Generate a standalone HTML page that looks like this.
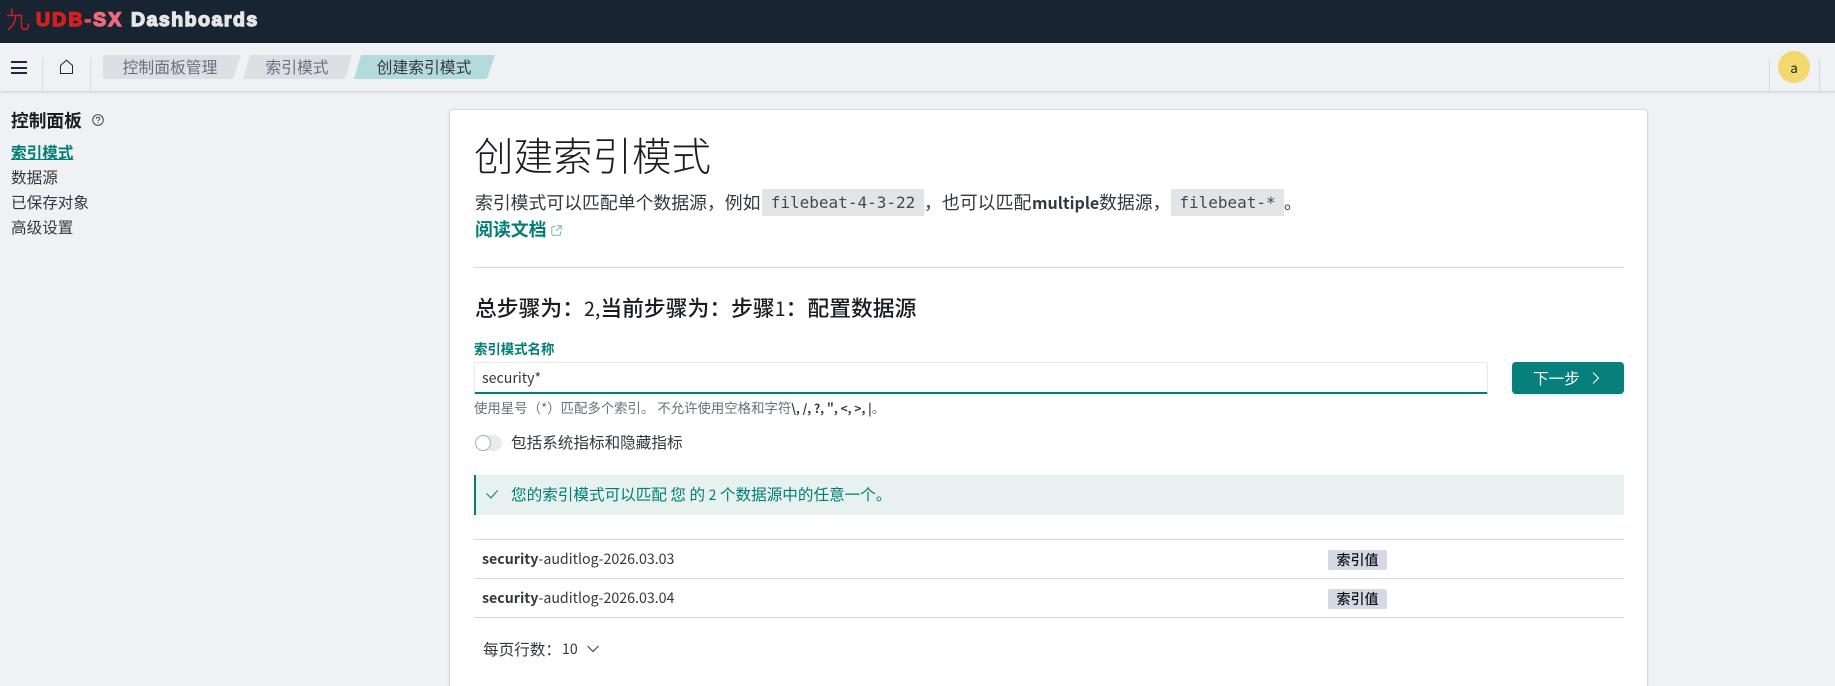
<!DOCTYPE html>
<html lang="zh"><head><meta charset="utf-8"><title>创建索引模式</title>
<style>
*{box-sizing:border-box}
html,body{margin:0;padding:0;width:1835px;height:686px;overflow:hidden;background:#f0f1f4}
body{font-family:"Noto Sans CJK SC","Liberation Sans",sans-serif;color:#343741;position:relative;font-size:16px}
.a{position:absolute;white-space:nowrap;line-height:1}
.top{left:0;top:0;width:1835px;height:43px;background:#182431}
.nav{left:0;top:43px;width:1835px;height:48px;background:#f0f1f4;box-shadow:0 1px 2px rgba(0,0,0,.16)}
.v{position:absolute;width:1px;background:#d6d8dd;top:59px;height:32px}
.logo{font-family:"Liberation Sans",sans-serif;font-weight:700;font-size:19.5px}
.bc{font-size:15.8px;text-align:center;line-height:24px;height:24px;top:55px;color:#69707d;width:140px}
.card{left:449px;top:109px;width:1199px;height:600px;background:#fff;border:1px solid #d6d8dd;border-radius:4px;box-shadow:0 1px 3px rgba(0,0,0,.08)}
.code{position:absolute;top:189px;height:27px;background:#e3e4e8;font-family:"DejaVu Sans Mono","Liberation Mono",monospace;font-size:16px;line-height:27px;text-align:center;color:#45484f}
.line{position:absolute;left:474px;width:1150px;height:1px;background:#d6d8dd}
.badge{position:absolute;left:1328px;width:59px;height:20px;background:#d3dae6;border-radius:2px;text-align:center;font-size:14px;line-height:20px;color:#111;font-weight:500}
.row{left:482px;font-size:14.2px;color:#343741}
.row b{font-weight:700}
</style></head><body>
<div class="a top"></div>
<svg class="a" style="left:6px;top:7px" width="24" height="24" viewBox="0 0 24 24" fill="none" stroke="#cc1f1f" stroke-width="1.5"><path d="M1 8.5H9.5C9.5 14 7.5 19 2 22.5M5.8 1.5V8.5M9.5 8.5H15.5V18.5C15.5 21.5 17 22.5 19 22.5C21.5 22.5 22.5 20.5 22.5 16.5"/></svg>
<div class="a logo" style="left:36px;top:11px;letter-spacing:2.1px;color:#d42020;-webkit-text-stroke:1.4px currentColor">UDB<span style="color:#e2505a">-</span><span style="color:#ee6a7c">SX</span></div>
<div class="a logo" style="left:131px;top:11px;letter-spacing:1.5px;color:#e6e6e6;-webkit-text-stroke:1.4px currentColor">Dashboards</div>

<div class="a nav"></div>
<div class="a" style="left:11px;top:61px;width:16px;height:2px;background:#1d2a3e"></div>
<div class="a" style="left:11px;top:67px;width:16px;height:2px;background:#1d2a3e"></div>
<div class="a" style="left:11px;top:72px;width:16px;height:2px;background:#1d2a3e"></div>
<div class="v" style="left:42px"></div>
<svg class="a" style="left:59px;top:59px" width="15" height="16" viewBox="0 0 15 16" fill="none" stroke="#1d2a3e" stroke-width="1"><path d="M1.5 14.5V6.5L7.5 1.2L13.5 6.5V14.5Z"/></svg>
<div class="v" style="left:90px"></div>
<svg class="a" style="left:103px;top:55px" width="393" height="24" viewBox="0 0 393 24">
<path d="M3 0H138L131 21Q130 24 127 24H3Q0 24 0 21V3Q0 0 3 0Z" fill="#dddfe5"/>
<path d="M147 0H249L243 21Q242 24 239 24H140Z" fill="#dddfe5"/>
<path d="M258 0H392L385 21Q384 24 381 24H251Z" fill="#b4dbdb"/>
</svg>
<div class="a bc" style="left:100px">控制面板管理</div>
<div class="a bc" style="left:227px">索引模式</div>
<div class="a bc" style="left:354px;color:#343741">创建索引模式</div>
<div class="v" style="left:1769px"></div>
<div class="v" style="left:1819px"></div>
<div class="a" style="left:1778px;top:51px;width:32px;height:32px;border-radius:50%;background:#f1d86f;text-align:center;line-height:32px;font-size:13.5px;color:#222">a</div>

<div class="a" style="left:11px;top:110px;font-size:17.7px;font-weight:700;color:#1a1c21;line-height:20px">控制面板</div>
<svg class="a" style="left:92px;top:114px" width="12" height="12" viewBox="0 0 12 12" fill="none" stroke="#343741" stroke-width=".9"><circle cx="6" cy="6" r="5.3"/><path d="M4.3 4.7C4.3 2.7 7.8 2.7 7.8 4.7C7.8 6 6 6 6 7.4"/><path d="M6 8.4V9.4"/></svg>
<div class="a" style="left:11px;top:142px;font-size:15.6px;font-weight:700;color:#017d73;text-decoration:underline;line-height:20px">索引模式</div>
<div class="a" style="left:11px;top:167px;font-size:15.6px;color:#343741;line-height:20px">数据源</div>
<div class="a" style="left:11px;top:192px;font-size:15.6px;color:#343741;line-height:20px">已保存对象</div>
<div class="a" style="left:11px;top:217px;font-size:15.6px;color:#343741;line-height:20px">高级设置</div>

<div class="a card"></div>
<div class="a" style="left:474px;top:129px;font-size:39.5px;font-weight:300;color:#1a1c21;line-height:52px">创建索引模式</div>
<div class="a" style="left:475px;top:189px;font-size:17.85px;line-height:27px;color:#343741">索引模式可以匹配单个数据源，例如</div>
<div class="code" style="left:762px;width:162px">filebeat-4-3-22</div>
<div class="a" style="left:924px;top:189px;font-size:17.9px;line-height:27px">，也可以匹配</div>
<div class="a" style="left:1032px;top:189px;font-size:16.1px;line-height:27px;font-weight:700">multiple</div>
<div class="a" style="left:1099px;top:189px;font-size:17.9px;line-height:27px">数据源，</div>
<div class="code" style="left:1171px;width:113px">filebeat-*</div>
<div class="a" style="left:1284px;top:189px;font-size:17.9px;line-height:27px">。</div>
<div class="a" style="left:475px;top:216px;font-size:17.9px;font-weight:700;color:#017d73;line-height:27px">阅读文档</div>
<svg class="a" style="left:551px;top:225px" width="11" height="11" viewBox="0 0 11 11" fill="none" stroke="#7ab5b0" stroke-width="1"><path d="M4.5 1.5H2Q.8 1.5 .8 2.7V9Q.8 10.2 2 10.2H8.3Q9.5 10.2 9.5 9V6.5M6 .8H10.2V5M10.2 .8L5 6"/></svg>
<div class="line" style="top:267px"></div>

<div class="a" style="left:475px;top:292px;font-size:21.8px;font-weight:500;color:#1a1c21;line-height:32px">总步骤为：<span style="font-size:19.6px;font-weight:400">2,</span>当前步骤为：步骤<span style="font-size:19.6px;font-weight:400">1</span>：配置数据源</div>
<div class="a" style="left:474px;top:340px;font-size:13.4px;font-weight:700;color:#017d73;line-height:16px">索引模式名称</div>
<div class="a" style="left:474px;top:362px;width:1014px;height:32px;background:#fff;border:1px solid #e3ecec;border-bottom:2px solid #017d73;border-radius:2px;box-shadow:0 1px 2px rgba(0,0,0,.03)"></div>
<div class="a" style="left:482px;top:367px;font-size:14.2px;color:#343741;line-height:22px">security*</div>
<div class="a" style="left:474px;top:398px;font-size:13.4px;color:#69707d;line-height:18px">使用星号（*）匹配多个索引。 不允许使用空格和字符<b style="color:#343741;font-size:12.1px">\, /, ?, ", &lt;, &gt;, |</b>。</div>
<div class="a" style="left:1512px;top:362px;width:112px;height:32px;background:#077f7b;border-radius:4px;box-shadow:0 1px 3px rgba(0,0,0,.15)"></div>
<div class="a" style="left:1533px;top:367px;font-size:15.6px;color:#fff;line-height:22px">下一步</div>
<svg class="a" style="left:1591px;top:371px" width="9" height="14" viewBox="0 0 9 14" fill="none" stroke="#fff" stroke-width="1"><path d="M2 1.5L7.5 7L2 12.5"/></svg>

<div class="a" style="left:475px;top:435px;width:27px;height:16px;border-radius:8px;background:#e9ebee"></div>
<div class="a" style="left:475px;top:435px;width:16px;height:16px;border-radius:50%;background:#fff;border:1px solid #a8adb5"></div>
<div class="a" style="left:511px;top:431px;font-size:15.6px;color:#343741;line-height:22px">包括系统指标和隐藏指标</div>

<div class="a" style="left:474px;top:475px;width:1150px;height:40px;background:#e6f1f0;border-left:2px solid #017d73"></div>
<svg class="a" style="left:485px;top:488px" width="14" height="12" viewBox="0 0 14 12" fill="none" stroke="#017d73" stroke-width="1"><path d="M1.5 5.5L6 10L12.5 2.5"/></svg>
<div class="a" style="left:511px;top:483px;font-size:15.6px;color:#017d73;line-height:22px">您的索引模式可以匹配 您 的 <span style="font-size:14.1px">2</span> 个数据源中的任意一个。</div>

<div class="line" style="top:539px"></div>
<div class="a row" style="top:548px;line-height:22px"><b>security</b>-auditlog-2026.03.03</div>
<div class="badge" style="top:550px">索引值</div>
<div class="line" style="top:578px"></div>
<div class="a row" style="top:587px;line-height:22px"><b>security</b>-auditlog-2026.03.04</div>
<div class="badge" style="top:589px">索引值</div>
<div class="line" style="top:617px"></div>

<div class="a" style="left:483px;top:638px;font-size:15.6px;color:#343741;line-height:22px">每页行数：</div>
<div class="a" style="left:562px;top:638px;font-size:14.1px;color:#343741;line-height:22px">10</div>
<svg class="a" style="left:586px;top:644px" width="14" height="10" viewBox="0 0 14 10" fill="none" stroke="#343741" stroke-width="1"><path d="M1.5 2L7 7.5L12.5 2"/></svg>
</body></html>
